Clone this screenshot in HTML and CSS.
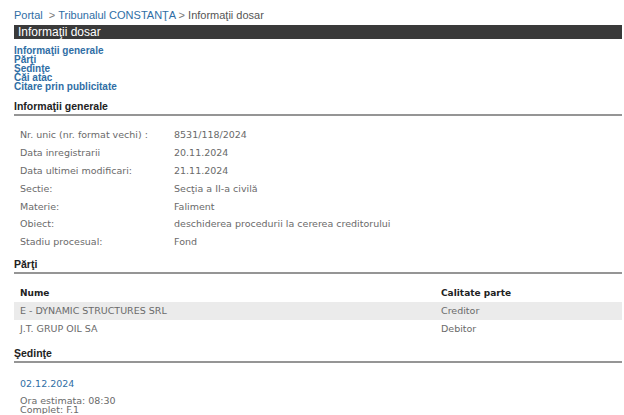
FILE: index.html
```html
<!DOCTYPE html>
<html lang="ro">
<head>
<meta charset="utf-8">
<title>Informaţii dosar</title>
<link rel="stylesheet" href="styles.css">
</head>
<body>
<div class="page">
  <div class="crumb"><a href="#">Portal</a> <span class="sep">&nbsp;&gt; </span><a href="#">Tribunalul CONSTANŢA</a><span class="sep"> &gt; </span><span class="cur">Informaţii dosar</span></div>
  <div class="bar">Informaţii dosar</div>
  <ul class="nav">
    <li><a href="#">Informaţii generale</a></li>
    <li><a href="#">Părţi</a></li>
    <li><a href="#">Şedinţe</a></li>
    <li><a href="#">Căi atac</a></li>
    <li><a href="#">Citare prin publicitate</a></li>
  </ul>

  <h2 class="sec">Informaţii generale</h2>
  <table class="info">
    <tr><td class="lbl">Nr. unic (nr. format vechi) :</td><td>8531/118/2024</td></tr>
    <tr><td class="lbl">Data inregistrarii</td><td>20.11.2024</td></tr>
    <tr><td class="lbl">Data ultimei modificari:</td><td>21.11.2024</td></tr>
    <tr><td class="lbl">Sectie:</td><td>Secţia a II-a civilă</td></tr>
    <tr><td class="lbl">Materie:</td><td>Faliment</td></tr>
    <tr><td class="lbl">Obiect:</td><td>deschiderea procedurii la cererea creditorului</td></tr>
    <tr><td class="lbl">Stadiu procesual:</td><td>Fond</td></tr>
  </table>

  <h2 class="sec sec-parti">Părţi</h2>
  <table class="parti">
    <tr class="head"><th class="c1">Nume</th><th>Calitate parte</th></tr>
    <tr class="alt"><td class="c1">E - DYNAMIC STRUCTURES SRL</td><td>Creditor</td></tr>
    <tr><td class="c1">J.T. GRUP OIL SA</td><td>Debitor</td></tr>
  </table>

  <h2 class="sec sec-sed">Şedinţe</h2>
  <div class="sedinta">
    <div class="date">02.12.2024</div>
    <div class="det">Ora estimata: 08:30</div>
    <div class="det">Complet: F.1</div>
  </div>
</div>
</body>
</html>
```

FILE: styles.css
```css
html, body {
  margin: 0;
  padding: 0;
  background: #ffffff;
}
.page {
  padding: 0 2px 0 14px;
  font-family: "Liberation Sans", Arial, sans-serif;
}
a {
  color: #2f6ea5;
  text-decoration: none;
}
.crumb {
  padding-top: 9px;
  height: 12px;
  line-height: 12px;
  font-size: 11px;
  color: #555;
}
.crumb a { color: #2f6ea5; }
.crumb .sep { color: #777; }
.crumb .cur { color: #555; }
.bar {
  margin-top: 4px;
  height: 14px;
  line-height: 14px;
  background: #3a3a3a;
  color: #fff;
  font-size: 12px;
  padding-left: 4px;
}
.nav {
  list-style: none;
  margin: 7px 0 0 0;
  padding: 0;
  font-size: 10px;
  line-height: 9px;
  font-weight: bold;
}
.nav li { height: 9px; }
.sec {
  margin: 9px 0 0 0;
  font-size: 10.5px;
  font-weight: bold;
  color: #222;
  line-height: 12px;
  padding-bottom: 2px;
  border-bottom: 2px solid #959595;
}
.info {
  border-collapse: collapse;
  margin-top: 10px;
  font-family: "DejaVu Sans", Verdana, sans-serif;
  font-size: 9.5px;
  color: #6a6a6a;
}
.info td {
  height: 17.8px;
  padding: 0;
  vertical-align: middle;
  white-space: nowrap;
}
.info td.lbl {
  width: 154px;
  padding-left: 6px;
}
.sec-parti { margin-top: 7px; }
.parti {
  width: 100%;
  border-collapse: collapse;
  margin-top: 10px;
  font-family: "DejaVu Sans", Verdana, sans-serif;
  font-size: 9.5px;
  color: #6a6a6a;
}
.parti th, .parti td {
  height: 18px;
  padding: 0;
  text-align: left;
  vertical-align: middle;
}
.parti th {
  color: #222;
  font-weight: bold;
  font-size: 9px;
}
.parti .c1 {
  width: 421px;
  padding-left: 6px;
}
.parti tr.alt td { background: #ebebeb; }
.sec-sed { margin-top: 9px; }
.sedinta {
  padding-left: 6px;
  font-family: "DejaVu Sans", Verdana, sans-serif;
  font-size: 9.5px;
  color: #6a6a6a;
}
.sedinta .date {
  margin-top: 15px;
  color: #2f6ea5;
  line-height: 12px;
}
.sedinta .det {
  line-height: 9px;
}
.sedinta .date + .det { margin-top: 6px; }
```
